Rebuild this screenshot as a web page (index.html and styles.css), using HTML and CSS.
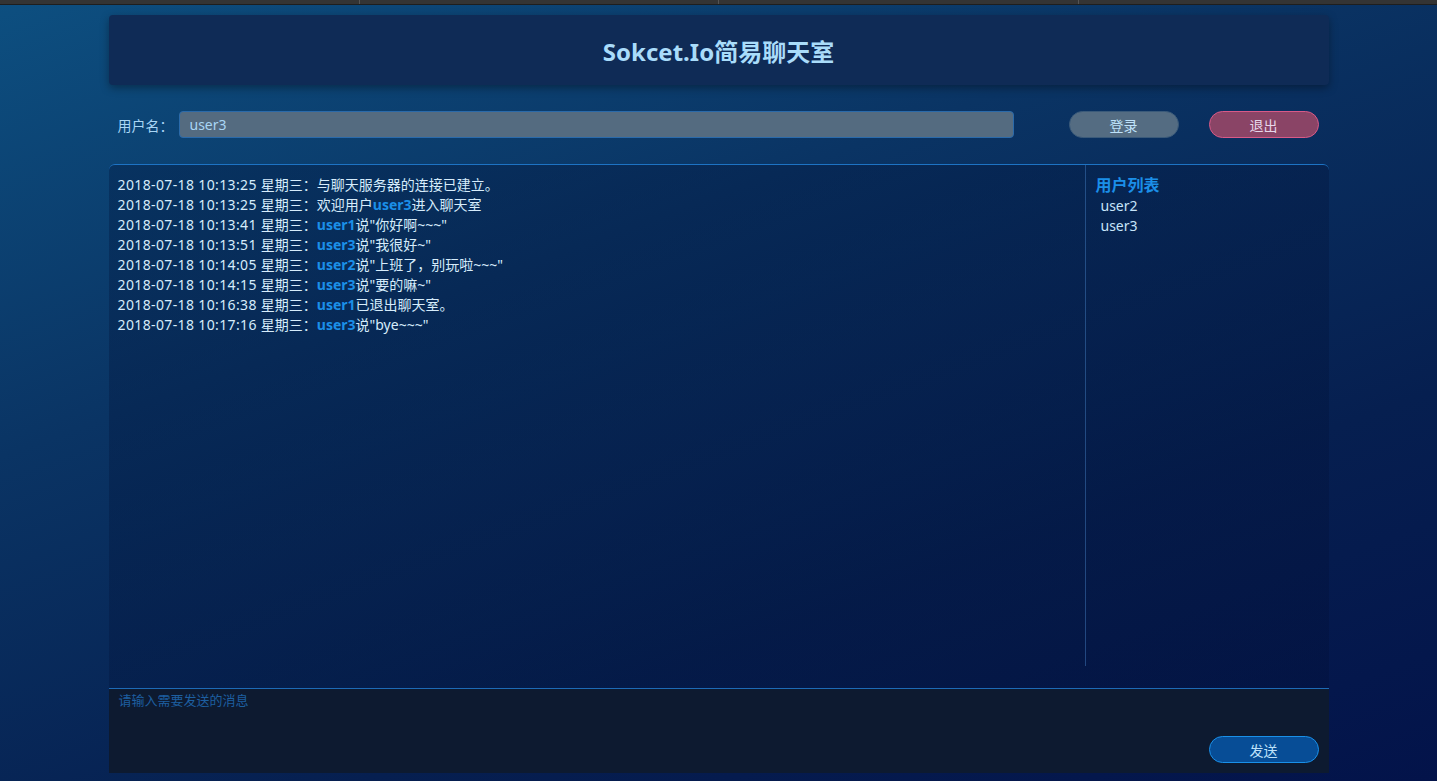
FILE: index.html
```html
<!DOCTYPE html>
<html lang="zh-CN">
<head>
<meta charset="utf-8">
<title>Sokcet.Io简易聊天室</title>
<link rel="stylesheet" href="styles.css">
</head>
<body>
<div class="topbar"><span></span><span></span><span></span></div>
<div class="wrap">
  <header class="header"><h1 class="title">Sokcet.Io简易聊天室</h1></header>
  <div class="login-row">
    <label class="label">用户名<span class="colon">：</span></label>
    <input class="name-input" type="text" value="user3">
    <button class="btn btn-login">登录</button>
    <button class="btn btn-exit">退出</button>
  </div>
  <section class="chat">
    <div class="chat-main">
      <div class="messages">
        <p class="msg"><span class="time">2018-07-18 10:13:25 </span>星期三<span class="colon">：</span>与聊天服务器的连接已建立。</p>
        <p class="msg"><span class="time">2018-07-18 10:13:25 </span>星期三<span class="colon">：</span>欢迎用户<b class="user">user3</b>进入聊天室</p>
        <p class="msg"><span class="time">2018-07-18 10:13:41 </span>星期三<span class="colon">：</span><b class="user">user1</b>说"你好啊~~~"</p>
        <p class="msg"><span class="time">2018-07-18 10:13:51 </span>星期三<span class="colon">：</span><b class="user">user3</b>说"我很好~"</p>
        <p class="msg"><span class="time">2018-07-18 10:14:05 </span>星期三<span class="colon">：</span><b class="user">user2</b>说"上班了，别玩啦~~~"</p>
        <p class="msg"><span class="time">2018-07-18 10:14:15 </span>星期三<span class="colon">：</span><b class="user">user3</b>说"要的嘛~"</p>
        <p class="msg"><span class="time">2018-07-18 10:16:38 </span>星期三<span class="colon">：</span><b class="user">user1</b>已退出聊天室。</p>
        <p class="msg"><span class="time">2018-07-18 10:17:16 </span>星期三<span class="colon">：</span><b class="user">user3</b>说"bye~~~"</p>
      </div>
      <aside class="users">
        <h2 class="users-title">用户列表</h2>
        <p class="user-item">user2</p>
        <p class="user-item">user3</p>
      </aside>
    </div>
    <div class="composer">
      <textarea class="compose-input" placeholder="请输入需要发送的消息"></textarea>
      <div class="compose-actions"><button class="btn btn-send">发送</button></div>
    </div>
  </section>
</div>
</body>
</html>
```

FILE: styles.css
```css
* { box-sizing: border-box; }
html, body { margin: 0; padding: 0; height: 100%; }
body {
  font-family: "Noto Sans", "Noto Sans CJK SC", sans-serif;
  background: linear-gradient(160deg, #0d4f80 0%, #0a3464 35%, #061f50 70%, #03134a 100%);
  color: #d6ecfb;
  overflow: hidden;
}
.topbar {
  height: 5px;
  background: #343434;
  border-bottom: 1px solid #1e1e1e;
  display: flex;
  justify-content: space-evenly;
}
.topbar span { width: 1px; height: 4px; background: #555; }
.wrap { width: 1220px; margin: 10px auto 0; }
.header {
  height: 70px;
  background: #0f2b56;
  border-radius: 4px;
  box-shadow: 0 3px 8px rgba(0, 0, 0, 0.35);
  display: flex;
  align-items: center;
  justify-content: center;
}
.title {
  margin: 0;
  font-size: 24px;
  font-weight: 700;
  color: #a9dcfa;
}
.login-row {
  display: flex;
  align-items: center;
  margin-top: 26px;
  padding: 0 10px 0 9px;
  height: 27px;
}
.label { font-size: 14px; color: #a9d6f5; width: 61px; }
.name-input {
  width: 835px;
  height: 27px;
  border: 1px solid #2a6aaa;
  border-radius: 4px;
  background: #546b80;
  color: #a9d6f5;
  font-family: inherit;
  font-size: 14px;
  padding: 0 10px;
  outline: none;
}
.btn {
  width: 110px;
  height: 27px;
  border-radius: 14px;
  font-family: inherit;
  font-size: 14px;
  color: #bfe2fa;
  cursor: pointer;
  padding: 0;
}
.btn-login { margin-left: 55px; background: #546c82; border: 1px solid #3a5a7a; }
.btn-exit { margin-left: 30px; background: #8a4466; border: 1px solid #d85a88; color: #e6d6ea; }
.chat {
  margin-top: 26px;
  border-top: 1px solid #1d73c4;
  border-radius: 6px 6px 0 0;
  background: linear-gradient(160deg, rgba(0, 20, 60, 0.35), rgba(0, 10, 45, 0.25));
}
.chat-main { display: flex; height: 523px; }
.messages { width: 976px; padding: 10px 9px; }
.msg { margin: 0; font-size: 14px; line-height: 20px; height: 20px; color: #d6ecfb; white-space: nowrap; }
.time { letter-spacing: 0.37px; }
.colon { font-family: "Noto Sans CJK TC", sans-serif; line-height: 1; }
.user { color: #1b8fe8; font-weight: 700; }
.users {
  flex: 1;
  margin-bottom: 22px;
  border-left: 1px solid rgba(70, 130, 200, 0.45);
  padding: 10px 10px;
}
.users-title { margin: 0; font-size: 16px; line-height: 20px; font-weight: 700; color: #1b8fe8; }
.user-item { margin: 0 0 0 5px; font-size: 14px; line-height: 20px; color: #c6e4fa; }
.user-item:first-of-type { margin-top: 1px; }
.composer {
  height: 85px;
  background: #0d1a30;
  border-top: 1px solid #1d6ab6;
  display: flex;
  flex-direction: column;
}
.compose-input {
  flex: 1;
  background: transparent;
  border: none;
  resize: none;
  outline: none;
  padding: 1px 10px;
  font-family: inherit;
  font-size: 13px;
  color: #c6e4fa;
}
.compose-input::placeholder { color: #1d5fa0; }
.compose-actions { display: flex; justify-content: flex-end; padding: 0 10px 10px 0; }
.btn-send { background: #074d96; border: 1px solid #1a90e8; color: #bfe2fa; }
```
